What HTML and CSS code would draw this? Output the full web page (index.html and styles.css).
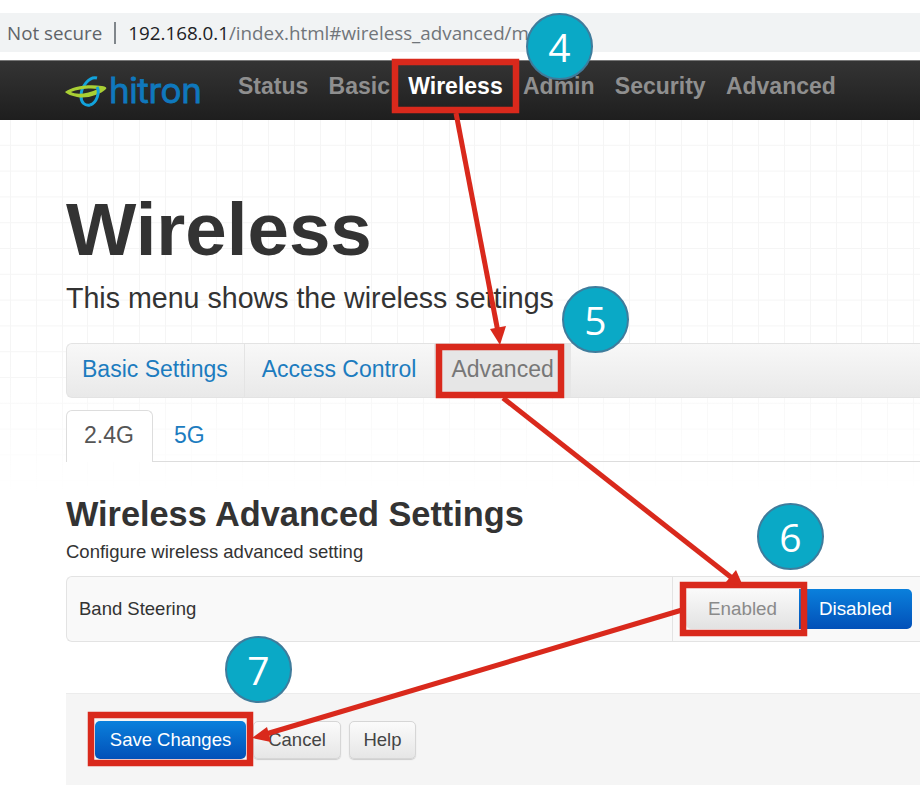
FILE: index.html
```html
<!DOCTYPE html>
<html lang="en">
<head>
<meta charset="utf-8">
<title>Wireless</title>
<link rel="stylesheet" href="styles.css">
</head>
<body>
<div class="address"><span class="sec">Not secure</span><span class="sep"></span><span class="host">192.168.0.1</span><span class="path">/index.html#wireless_advanced/m</span></div>
<header class="navbar">
  <div class="logo">
    <svg class="logo-mark" width="44" height="32" viewBox="0 0 44 32">
      <path d="M33 2C25 0 17 11 17 20C17 27 21 30 26 29" fill="none" stroke="#12a3dc" stroke-width="3"/>
      <path d="M1 16C8 11 22 8 38 10C42 10.500 43 12 42 13C36 19 22 23 13 21C8 20 3 18 1 16ZM7 16C12 19 24 18 34 13C26 11.500 14 13 7 16Z" fill="#a9cf34"/>
      <path d="M33 11C36 16 33 27 26 29" fill="none" stroke="#12a3dc" stroke-width="3"/>
    </svg>
    <span class="logo-text">hitron</span>
  </div>
  <nav class="menu"><a>Status</a><a class="tight">Basic</a><a class="active">Wireless</a><a>Admin</a><a>Security</a><a>Advanced</a></nav>
</header>
<main class="main">
  <h1>Wireless</h1>
  <p class="lead">This menu shows the wireless settings</p>
  <div class="pills"><a class="pill">Basic Settings</a><a class="pill">Access Control</a><a class="pill current">Advanced</a></div>
  <div class="tabs"><a class="tab on">2.4G</a><a class="tab">5G</a></div>
  <h2>Wireless Advanced Settings</h2>
  <p class="desc">Configure wireless advanced setting</p>
  <div class="row">
    <div class="label">Band Steering</div>
    <div class="control"><span class="btn seg grey">Enabled</span><span class="btn seg blue">Disabled</span></div>
  </div>
  <div class="actions"><span class="btn blue save">Save Changes</span><span class="btn light cancel">Cancel</span><span class="btn light help">Help</span></div>
</main>
<svg class="overlay" width="920" height="786" viewBox="0 0 920 786">
  <g fill="none" stroke="#d9291c" stroke-width="6.500">
    <rect x="395" y="62" width="121" height="48"/>
    <rect x="439" y="347" width="122" height="48"/>
    <rect x="683" y="585" width="121" height="48"/>
    <rect x="91" y="715" width="159" height="48"/>
  </g>
  <g stroke="#d9291c" stroke-width="5" fill="none">
    <path d="M456 113L498 332"/>
    <path d="M503 398L732 578"/>
    <path d="M682 610L266 734"/>
  </g>
  <g fill="#d9291c">
    <path d="M500 345L490 329L506 326Z"/>
    <path d="M743 586L726 582L736 570Z"/>
    <path d="M252 738L267 727L271 742Z"/>
  </g>
</svg>
<div class="badge b4">4</div>
<div class="badge b5">5</div>
<div class="badge b6">6</div>
<div class="badge b7">7</div>
</body>
</html>
```
FILE: styles.css
```css
* { box-sizing: border-box; }
html, body { margin: 0; padding: 0; }
body {
  position: relative;
  width: 920px;
  height: 786px;
  overflow: hidden;
  background: #fff;
  font-family: "Liberation Sans", Arial, sans-serif;
  color: #333;
}
.address {
  display: flex;
  align-items: center;
  margin-top: 13px;
  height: 39px;
  padding-left: 7px;
  background: #f1f3f4;
  font-family: "Open Sans", sans-serif;
  font-size: 18.8px;
  white-space: nowrap;
  overflow: hidden;
}
.sec { color: #5f6368; }
.sep { width: 2px; height: 22px; background: #80868b; margin: 0 12px 0 12px; }
.host { color: #202124; }
.path { color: #70757a; }
.navbar {
  display: flex;
  align-items: center;
  margin-top: 8px;
  height: 60px;
  padding-left: 64px;
  background: linear-gradient(#343434, #1e1e1e);
  border-top: 1px solid #777;
}
.logo { display: flex; align-items: center; width: 174px; margin-top: 2px; }
.logo-mark { flex: none; margin-right: 1px; }
.logo-text { color: #0f78bd; font: 400 35px "Inter", sans-serif; letter-spacing: -0.4px; -webkit-text-stroke: .8px #0f78bd; margin-top: -3px; }
.menu { display: flex; gap: 20.3px; font-size: 23px; font-weight: 700; color: #8f8f8f; margin-bottom: 8px; }
.menu a { display: block; }
.menu .tight { margin-right: -2px; }
.menu .active { color: #fff; }
.main {
  height: 666px;
  padding: 0 0 0 66px;
  background-color: #fff;
  background-image:
    linear-gradient(rgba(255,255,255,0) 36%, #fff 56%),
    repeating-linear-gradient(90deg, transparent 0 10px, #f5f5f5 10px 11px, transparent 11px 25.8px),
    repeating-linear-gradient(180deg, transparent 0 25px, #f5f5f5 25px 26px, transparent 26px 25.8px);
  background-size: 100% 100%, 100% 100%, 100% 25.8px;
}
h1 { margin: 0; padding-top: 67px; font-size: 74.5px; line-height: 85px; font-weight: 700; color: #333; }
.lead { margin: 10px 0 0; font-size: 28.6px; line-height: 32px; color: #333; }
.pills {
  display: flex;
  margin-top: 29px;
  height: 55px;
  border: 1px solid #e3e3e3;
  border-right: 0;
  border-radius: 6px 0 0 6px;
  background: linear-gradient(#f8f8f8, #e9e9e9);
  font-size: 23px;
}
.pill { display: flex; align-items: center; padding: 0 16px 2px 15px; color: #1c7cbf; border-right: 1px solid #e4e4e4; }
.pill:nth-child(2) { padding: 0 18px 2px 17px; }
.pill.current { color: #777; background: #e6e6e6; border-right: 0; padding: 0 17px 2px 16px; }
.tabs {
  display: flex;
  margin-top: 12px;
  height: 52px;
  border-bottom: 1px solid #ddd;
  font-size: 23px;
}
.tab { display: flex; align-items: center; padding: 0 18px 2px 21px; color: #1c7cbf; height: 52px; }
.tab.on { width: 87px; padding: 0 0 2px 17px; color: #555; background: #fff; border: 1px solid #ddd; border-bottom: 0; border-radius: 6px 6px 0 0; }
h2 { margin: 33px 0 0; font-size: 34.3px; line-height: 38px; font-weight: 700; color: #333; }
.desc { margin: 8px 0 0; font-size: 18.5px; line-height: 22px; color: #333; }
.row {
  display: flex;
  margin-top: 13px;
  height: 66px;
  background: #f9f9f9;
  border: 1px solid #e3e3e3;
  border-right: 0;
  border-radius: 6px 0 0 6px;
}
.label { width: 606px; padding: 0 0 0 12px; display: flex; align-items: center; font-size: 18.5px; border-right: 1px solid #e3e3e3; }
.control { display: flex; align-items: center; padding-left: 13px; }
.btn { display: flex; align-items: center; justify-content: center; height: 38px; font-size: 18.5px; border-radius: 5px; }
.seg { width: 113px; height: 40px; font-size: 18.8px; }
.grey { color: #8a8a8a; background: linear-gradient(#fafafa, #e2e2e2); border-radius: 5px 0 0 5px; }
.blue { color: #fff; background: linear-gradient(#0a80dc, #0250b8); }
.seg.blue { border-radius: 0 5px 5px 0; }
.light { color: #444; background: linear-gradient(#fbfbfb, #e6e6e6); border: 1px solid #d6d6d6; box-shadow: 0 1px 1px #ccc; }
.actions {
  display: flex;
  align-items: center;
  margin-top: 51px;
  height: 92px;
  padding: 0 0 0 29px;
  background: #f5f5f5;
  border-top: 1px solid #ececec;
}
.save { width: 151px; }
.cancel { width: 88px; margin-left: 7px; }
.help { width: 67px; margin-left: 8px; }
.overlay { position: absolute; left: 0; top: 0; }
.badge {
  position: absolute;
  width: 67px;
  height: 67px;
  display: flex;
  align-items: center;
  justify-content: center;
  border-radius: 50%;
  background: #0aa9c6;
  border: 2px solid #3f7c9c;
  color: #fff;
  font: 400 39px "Open Sans", sans-serif;
}
.b4 { left: 526px; top: 13px; }
.b5 { left: 562px; top: 286px; }
.b6 { left: 757px; top: 503px; }
.b7 { left: 225px; top: 636px; }
```
